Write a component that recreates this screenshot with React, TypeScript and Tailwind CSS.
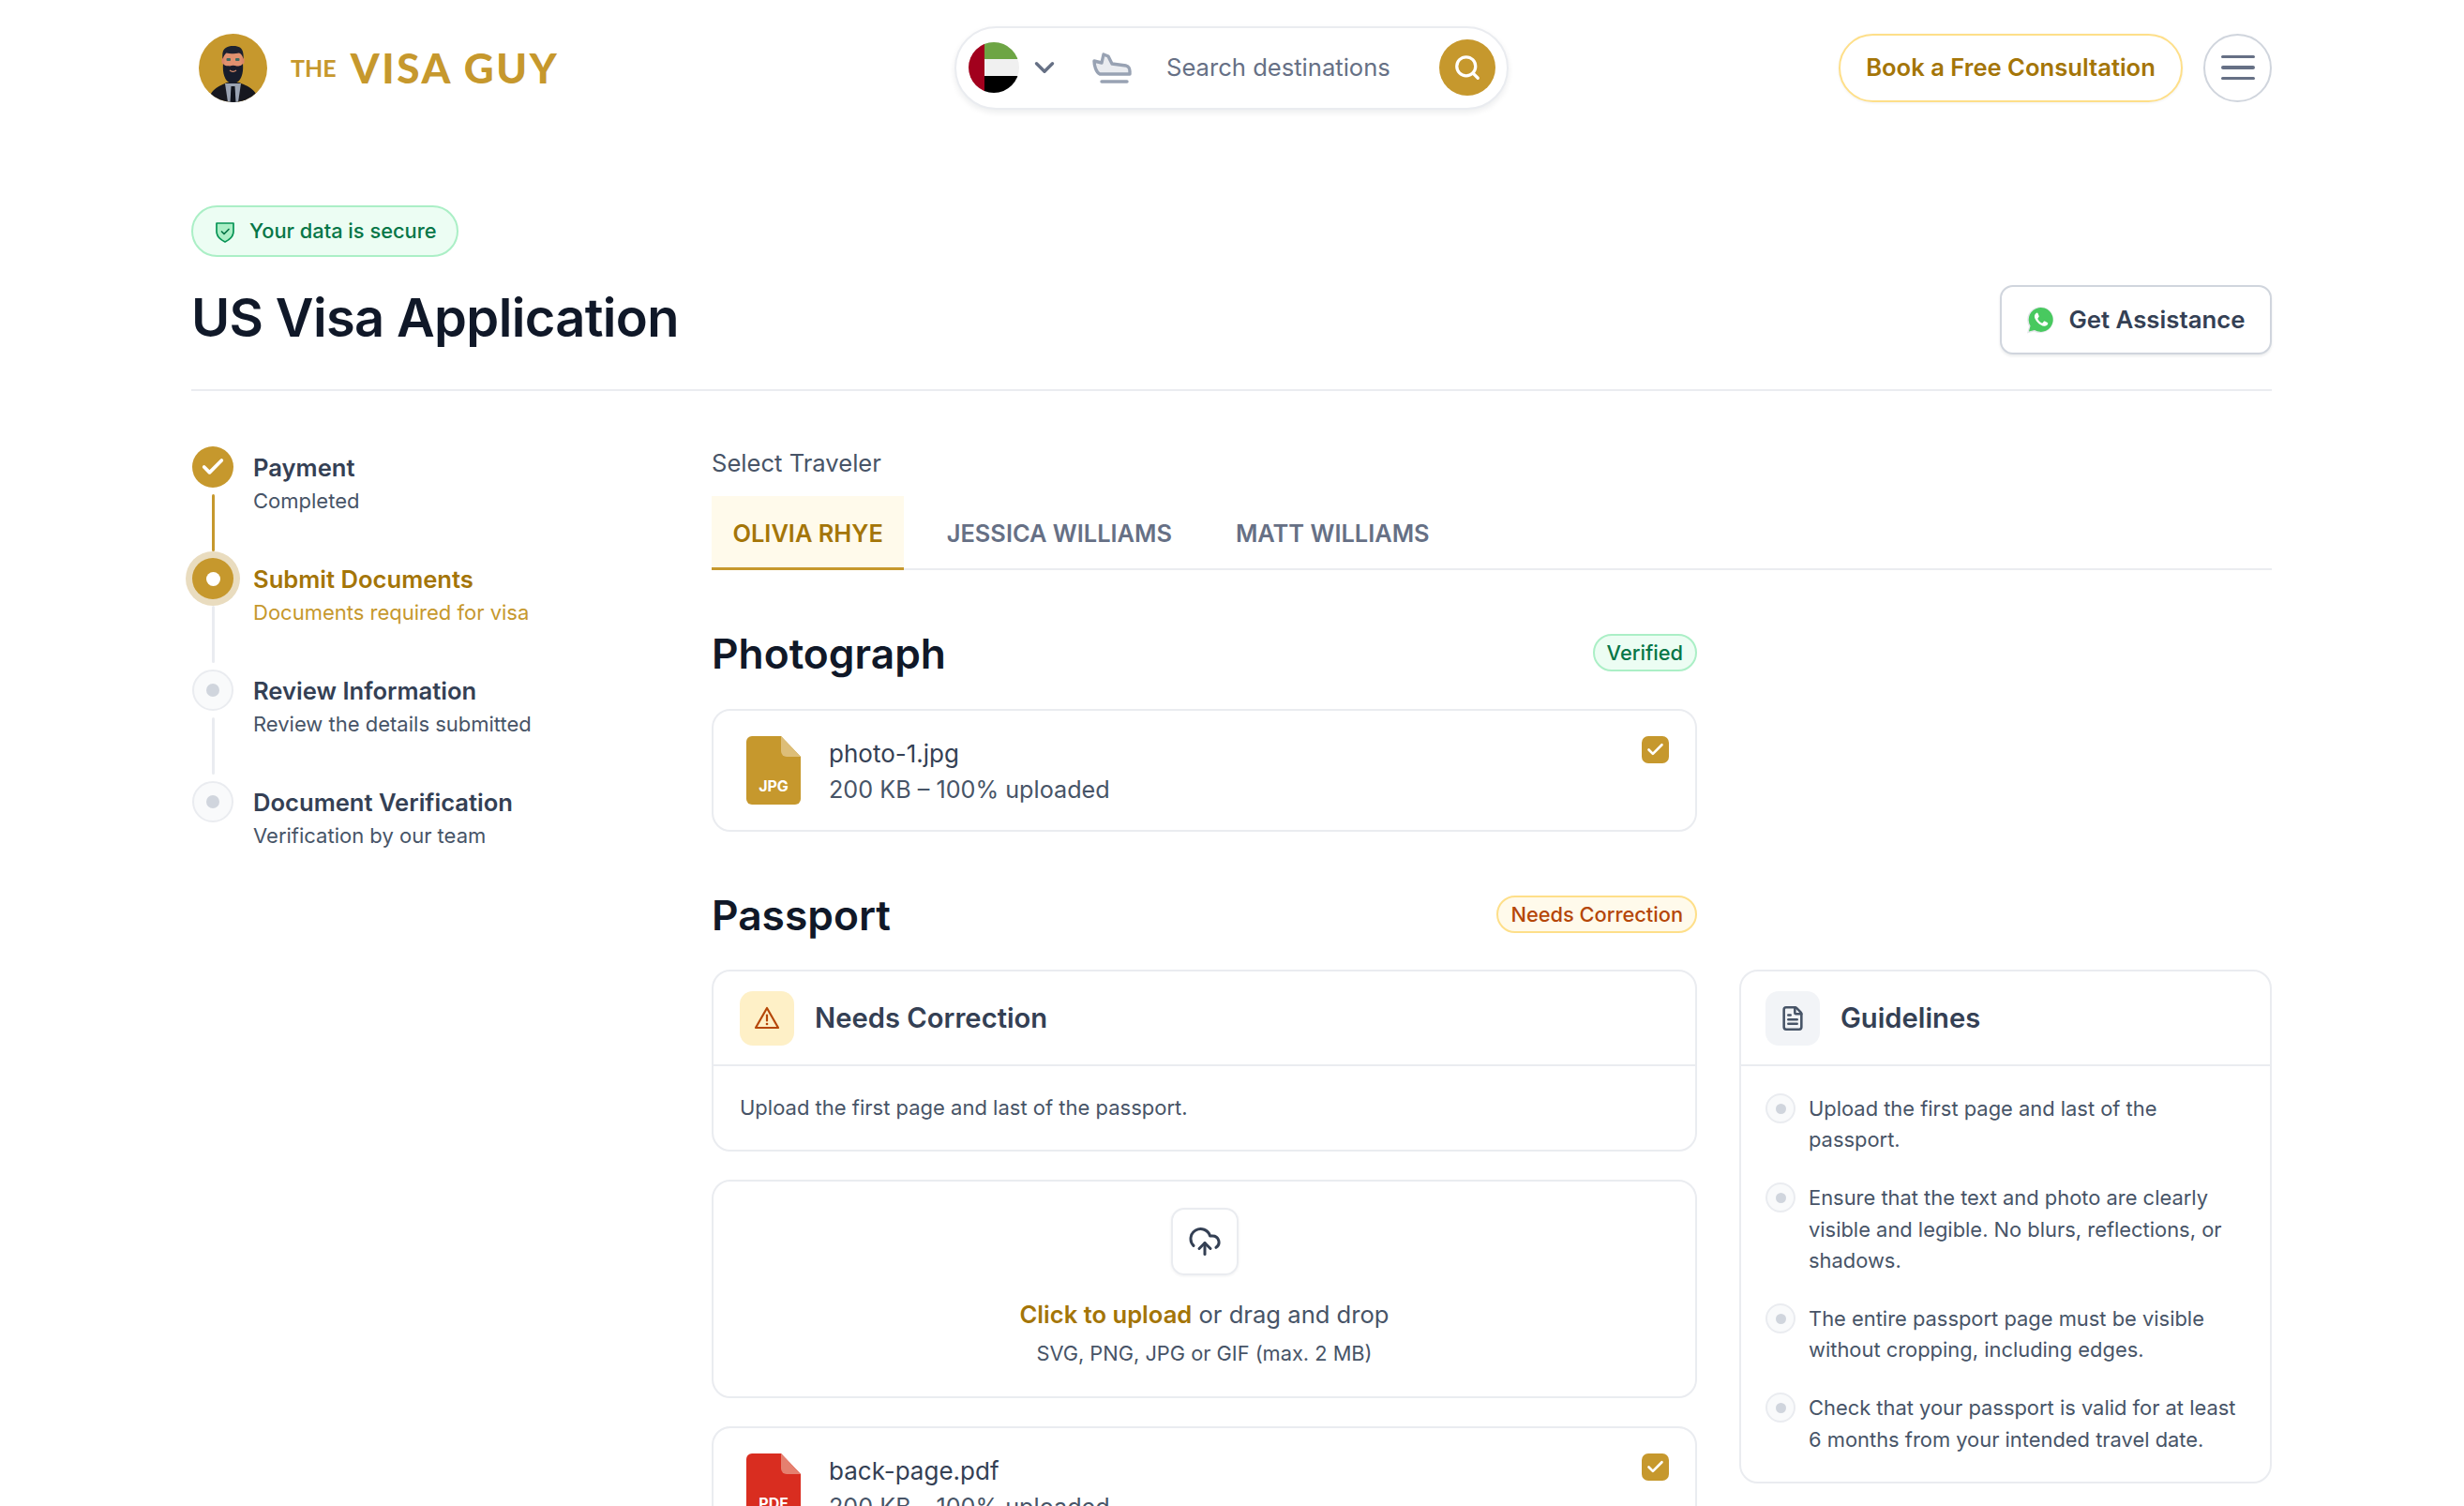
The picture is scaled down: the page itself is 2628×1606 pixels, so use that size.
// Visa application - documents step
import { Check, ChevronDown, CloudUpload, FileText, Search } from 'lucide-react';

const steps = [
    { title: 'Payment', sub: 'Completed', state: 'done' },
    { title: 'Submit Documents', sub: 'Documents required for visa', state: 'active' },
    { title: 'Review Information', sub: 'Review the details submitted', state: 'todo' },
    { title: 'Document Verification', sub: 'Verification by our team', state: 'todo' },
];

const guidelines = [
    'Upload the first page and last of the passport.',
    'Ensure that the text and photo are clearly visible and legible. No blurs, reflections, or shadows.',
    'The entire passport page must be visible without cropping, including edges.',
    'Check that your passport is valid for at least 6 months from your intended travel date.',
];

function Avatar() {
    return (
        <svg viewBox="0 0 73 73" className="ml-[8px] w-[73px] h-[73px] shrink-0">
            <defs>
                <clipPath id="avatar-clip">
                    <circle cx="36.5" cy="36.5" r="36.5" />
                </clipPath>
            </defs>
            <g clipPath="url(#avatar-clip)">
                <rect width="73" height="73" fill="#C6982D" />
                <path d="M10 73 C12 58 24 55 30 52 L43 52 C50 55 62 58 64 73 Z" fill="#17181f" />
                <path d="M28 53 L45 53 L42 73 L31 73 Z" fill="#9aa3b2" />
                <path d="M34.5 56 L38.5 56 L39.5 73 L33.5 73 Z" fill="#10131c" />
                <rect x="26" y="18" width="21" height="20" rx="7" fill="#e0916f" />
                <rect x="24.5" y="25" width="3" height="7" rx="1.5" fill="#d98667" />
                <rect x="45.5" y="25" width="3" height="7" rx="1.5" fill="#d98667" />
                <path d="M25.5 27 C24 16 29 13 37 13 C45 13 48.5 17 47.5 27 C46.5 23 45 21 43 20.5 C38 22 32 21 29.5 20.5 C27.5 22 26.5 24 25.5 27 Z" fill="#1d2230" />
                <path d="M26 32 C28 35 31 34 33 34.5 C35.5 33.5 38 33.5 40.5 34.5 C42.5 34 45 35 47 32 C48 42 45 53 36.5 53 C28 53 25 42 26 32 Z" fill="#171c2b" />
                <rect x="29.5" y="26" width="4.5" height="3" rx="1" fill="#3f6b62" />
                <rect x="39" y="26" width="4.5" height="3" rx="1" fill="#3f6b62" />
                <path d="M33 39 C35 40.5 38 40.5 40 39" stroke="#e0916f" strokeWidth="1.2" fill="none" />
            </g>
        </svg>
    );
}

function Flag() {
    return (
        <svg viewBox="0 0 54 54" className="w-[54px] h-[54px] shrink-0">
            <defs>
                <clipPath id="flag-clip">
                    <circle cx="27" cy="27" r="27" />
                </clipPath>
            </defs>
            <g clipPath="url(#flag-clip)">
                <rect width="54" height="54" fill="#F0F0F0" />
                <rect x="17" width="37" height="18" fill="#6DA544" />
                <rect x="17" y="36" width="37" height="18" fill="#000000" />
                <rect width="17" height="54" fill="#A2001D" />
            </g>
        </svg>
    );
}

function PlaneIcon() {
    return (
        <svg viewBox="0 0 42 34" className="w-[42px] h-[34px] shrink-0" fill="none">
            <path d="M2 10 L10 12 L12 3 L17 5 L21 13 L36 15 C39 16 40 18 40 21 L40 24 L8 24 C4 22 2 15 2 10 Z" fill="#EAECF0" stroke="#98A2B3" strokeWidth="3.4" strokeLinejoin="round" />
            <path d="M10 32 H37" stroke="#98A2B3" strokeWidth="3.4" strokeLinecap="round" />
        </svg>
    );
}

function ShieldIcon() {
    return (
        <svg viewBox="0 0 24 24" className="w-[24px] h-[26px] shrink-0" fill="none">
            <path d="M3 3 H21 V12 C21 17.5 16 21 12 23 C8 21 3 17.5 3 12 Z" fill="#ABEFC6" stroke="#079455" strokeWidth="1.7" strokeLinejoin="round" />
            <path d="M8.5 12 L11 14.5 L16 9.5" stroke="#067647" strokeWidth="1.7" strokeLinecap="round" strokeLinejoin="round" />
        </svg>
    );
}

function WhatsappIcon() {
    return (
        <svg viewBox="0 0 32 32" className="w-[31px] h-[32px] shrink-0">
            <path d="M1 31 L3.2 23.4 A14.4 14.4 0 1 1 8.8 28.8 Z" fill="#E5E7EB" />
            <path d="M3 29 L4.7 22.8 A13.4 13.4 0 1 1 9.3 27.4 Z" fill="#48C95F" />
            <path d="M11.6 8.4 C10.4 8.9 9 10.4 9.2 12.6 C9.5 16.4 15 22.6 20 23 C22 23.1 23.6 21.8 24 20.5 C24.2 19.8 24 19.3 23.4 19 L20.6 17.6 C20.1 17.4 19.7 17.5 19.4 17.9 L18.3 19.3 C18 19.6 17.6 19.7 17.2 19.5 C15.5 18.7 13.7 16.9 12.8 15.1 C12.6 14.7 12.7 14.4 13 14.1 L13.9 13 C14.2 12.6 14.2 12.3 14.1 11.9 L13 9 C12.7 8.4 12.2 8.2 11.6 8.4 Z" fill="#FFFFFF" />
        </svg>
    );
}

function WarningIcon() {
    return (
        <svg viewBox="0 0 28 28" className="w-[28px] h-[28px]" fill="none">
            <path d="M14 3 L26 24 H2 Z" fill="#FEF0C7" stroke="#B54708" strokeWidth="2.2" strokeLinejoin="round" />
            <path d="M14 10.5 V16.5" stroke="#B54708" strokeWidth="2.2" strokeLinecap="round" />
            <circle cx="14" cy="20" r="1.3" fill="#B54708" />
        </svg>
    );
}

function FileIcon({ label, color, fold }: { label: string; color: string; fold: string }) {
    return (
        <div className="relative w-[58px] h-[73px] shrink-0">
            <svg viewBox="0 0 58 73" className="w-[58px] h-[73px]">
                <path d="M6 0 H37 L58 22 V67 A6 6 0 0 1 52 73 H6 A6 6 0 0 1 0 67 V6 A6 6 0 0 1 6 0 Z" fill={color} />
                <path d="M37 0 L58 22 H43 A6 6 0 0 1 37 16 Z" fill={fold} />
            </svg>
            <span className="absolute inset-x-0 bottom-[10px] text-center text-white text-[16px] leading-[20px] font-bold">{label}</span>
        </div>
    );
}

function FileRow({ name, label, color, fold }: { name: string; label: string; color: string; fold: string }) {
    return (
        <div className="flex items-start h-[131px] pl-[35px] pr-[28px] pt-[27px] border-2 border-[#EAECF0] rounded-[20px] bg-white">
            <FileIcon label={label} color={color} fold={fold} />
            <div className="ml-[30px] flex-1 -mt-[1px]">
                <div className="text-[26px] leading-[40px] text-[#344054]">{name}</div>
                <div className="text-[25.2px] leading-[40px] text-[#475467] -mt-[2px]">200 KB – 100% uploaded</div>
            </div>
            <div className="w-[29px] h-[29px] rounded-[7px] bg-[#C6982D] flex items-center justify-center">
                <Check className="w-[21px] h-[21px] text-white" strokeWidth={3} />
            </div>
        </div>
    );
}

function Stepper() {
    return (
        <div className="w-[555px] shrink-0 pt-[59px]">
            {steps.map((s, i) => (
                <div key={s.title} className="flex">
                    <div className="w-[46px] flex flex-col items-center">
                        {s.state === 'done' && (
                            <div className="w-[44px] h-[44px] rounded-full bg-[#C6982D] flex items-center justify-center">
                                <Check className="w-[28px] h-[28px] text-white" strokeWidth={3.2} />
                            </div>
                        )}
                        {s.state === 'active' && (
                            <div className="w-[44px] h-[44px] rounded-full bg-[#C6982D] ring-[7px] ring-[#E9DCBF] flex items-center justify-center">
                                <div className="w-[15px] h-[15px] rounded-full bg-white" />
                            </div>
                        )}
                        {s.state === 'todo' && (
                            <div className="w-[44px] h-[44px] rounded-full bg-[#F9FAFB] border-2 border-[#EAECF0] flex items-center justify-center">
                                <div className="w-[14px] h-[14px] rounded-full bg-[#D0D5DD]" />
                            </div>
                        )}
                        {i < steps.length - 1 && (
                            <div className={`w-[3px] h-[61px] my-[7px] rounded-full ${s.state === 'done' ? 'bg-[#C6982D]' : 'bg-[#EAECF0]'}`} />
                        )}
                    </div>
                    <div className="ml-[20px] pt-[3px]">
                        <div className={`text-[25.6px] leading-[39px] font-semibold ${s.state === 'active' ? 'text-[#A47508]' : 'text-[#344054]'}`}>{s.title}</div>
                        <div className={`text-[22px] leading-[33px] ${s.state === 'active' ? 'text-[#C6982D]' : 'text-[#475467]'}`}>{s.sub}</div>
                    </div>
                </div>
            ))}
        </div>
    );
}

function SectionHead({ title, badge, tone }: { title: string; badge: string; tone: 'ok' | 'warn' }) {
    return (
        <div className="flex items-center justify-between h-[60px] w-[1051px]">
            <h2 className="text-[44.3px] leading-[60px] font-semibold text-[#101828]">{title}</h2>
            <span className={`h-[40px] mb-[2px] px-[13px] flex items-center rounded-full border-2 text-[21.8px] font-medium ${tone === 'ok' ? 'bg-[#ECFDF3] border-[#ABEFC6] text-[#067647]' : 'bg-[#FFFAEB] border-[#FEDF89] text-[#B54708]'}`}>
                {badge}
            </span>
        </div>
    );
}

export default function App() {
    return (
        <div className="h-[1606px] overflow-hidden bg-white font-['Inter',sans-serif] pl-[204px] pr-[205px]">
            {/* Top bar */}
            <header className="h-[144px] flex items-center">
                <div className="flex-1 min-w-0 flex items-center">
                    <Avatar />
                    <div className="ml-[25px] flex items-center font-['Lato',sans-serif] font-black text-[#C6982D]">
                        <span className="text-[25px] leading-[50px] font-bold">THE</span>
                        <span className="ml-[15px] text-[44px] leading-[50px] tracking-[2.7px]">VISA GUY</span>
                    </div>
                </div>
                <div className="w-[591px] h-[89px] shrink-0 flex items-center rounded-full border-2 border-[#EAECF0] bg-white shadow-[0_3px_6px_rgba(16,24,40,0.08)] pl-[13px] pr-[12px]">
                    <Flag />
                    <ChevronDown className="ml-[10px] w-[34px] h-[34px] text-[#667085]" strokeWidth={2.4} />
                    <div className="ml-[34px]"><PlaneIcon /></div>
                    <span className="ml-[37px] flex-1 text-[25.6px] text-[#667085]">Search destinations</span>
                    <div className="w-[60px] h-[60px] rounded-full bg-[#C6982D] flex items-center justify-center">
                        <Search className="w-[30px] h-[30px] text-white" strokeWidth={2.6} />
                    </div>
                </div>
                <div className="flex-1 min-w-0 flex items-center justify-end gap-[22px]">
                    <button className="h-[73px] w-[367px] rounded-full border-2 border-[#FEDF89] bg-white text-[25.6px] font-semibold text-[#A47508] shadow-[0_1px_3px_rgba(16,24,40,0.06)]">
                        Book a Free Consultation
                    </button>
                    <div className="w-[73px] h-[73px] rounded-full border-2 border-[#D0D5DD] flex flex-col items-center justify-center gap-[8px]">
                        <span className="w-[36px] h-[3.4px] rounded-full bg-[#667085]" />
                        <span className="w-[36px] h-[3.4px] rounded-full bg-[#667085]" />
                        <span className="w-[36px] h-[3.4px] rounded-full bg-[#667085]" />
                    </div>
                </div>
            </header>

            {/* Title */}
            <div className="pt-[75px] pb-[37px] border-b-2 border-[#EAECF0] flex justify-between items-end">
                <div>
                    <span className="inline-flex items-center h-[55px] pl-[22px] pr-[22px] gap-[14px] rounded-full bg-[#ECFDF3] border-2 border-[#ABEFC6] text-[21.8px] font-medium text-[#067647]">
                        <ShieldIcon />
                        Your data is secure
                    </span>
                    <h1 className="mt-[27px] mb-[1px] text-[56px] leading-[76px] tracking-[-0.65px] font-semibold text-[#101828]">US Visa Application</h1>
                </div>
                <button className="h-[74px] w-[290px] flex items-center justify-center gap-[14px] rounded-[14px] border-2 border-[#D0D5DD] bg-white shadow-[0_2px_3px_rgba(16,24,40,0.08)] text-[25.8px] font-semibold text-[#344054]">
                    <WhatsappIcon />
                    Get Assistance
                </button>
            </div>

            <div className="flex items-start">
                <Stepper />

                <main className="flex-1 pt-[57px]">
                    <div className="text-[25.6px] leading-[40px] text-[#475467]">Select Traveler</div>
                    <div className="mt-[15px] flex gap-[23px] h-[79px] border-b-2 border-[#EAECF0]">
                        <div className="h-[79px] px-[22.5px] pt-[4px] flex items-center border-b-[3px] border-[#C6982D] bg-[#FFFAEB] text-[25.4px] font-semibold text-[#A47508]">OLIVIA RHYE</div>
                        <div className="h-[79px] px-[22.5px] pt-[1px] flex items-center text-[25.4px] font-semibold text-[#667085]">JESSICA WILLIAMS</div>
                        <div className="h-[79px] px-[22.5px] pt-[1px] flex items-center text-[25.4px] font-semibold text-[#667085]">MATT WILLIAMS</div>
                    </div>

                    <div className="mt-[59px]">
                        <SectionHead title="Photograph" badge="Verified" tone="ok" />
                        <div className="mt-[29px] w-[1051px]">
                            <FileRow name="photo-1.jpg" label="JPG" color="#C6982D" fold="#DDBE78" />
                        </div>
                    </div>

                    <div className="mt-[59px]">
                        <SectionHead title="Passport" badge="Needs Correction" tone="warn" />
                        <div className="mt-[28px] flex items-start gap-[45px]">
                            <div className="w-[1051px] shrink-0 flex flex-col gap-[30px]">
                                <div className="border-2 border-[#EAECF0] rounded-[20px] bg-white">
                                    <div className="h-[101px] px-[28px] flex items-center gap-[22px] border-b-2 border-[#EAECF0]">
                                        <div className="w-[58px] h-[58px] rounded-[14px] bg-[#FEF0C7] flex items-center justify-center">
                                            <WarningIcon />
                                        </div>
                                        <span className="text-[29.2px] font-semibold text-[#344054]">Needs Correction</span>
                                    </div>
                                    <div className="h-[89px] px-[28px] flex items-center text-[22px] text-[#475467]">
                                        Upload the first page and last of the passport.
                                    </div>
                                </div>

                                <div className="h-[233px] border-2 border-[#EAECF0] rounded-[20px] bg-white flex flex-col items-center pt-[28px]">
                                    <div className="w-[72px] h-[72px] rounded-[14px] border-2 border-[#EAECF0] shadow-[0_1px_3px_rgba(16,24,40,0.06)] flex items-center justify-center">
                                        <CloudUpload className="w-[36px] h-[36px] text-[#344054]" strokeWidth={2} />
                                    </div>
                                    <div className="mt-[22px] text-[25.6px] leading-[40px] text-[#475467]">
                                        <span className="font-semibold text-[#A47508]">Click to upload</span> or drag and drop
                                    </div>
                                    <div className="mt-[5px] text-[21.8px] leading-[33px] text-[#475467]">SVG, PNG, JPG or GIF (max. 2 MB)</div>
                                </div>

                                <FileRow name="back-page.pdf" label="PDF" color="#D92D20" fold="#E5806F" />
                            </div>

                            <div className="flex-1 border-2 border-[#EAECF0] rounded-[20px] bg-white">
                                <div className="h-[101px] px-[26px] flex items-center gap-[22px] border-b-2 border-[#EAECF0]">
                                    <div className="w-[58px] h-[58px] rounded-[14px] bg-[#F2F4F7] flex items-center justify-center">
                                        <FileText className="w-[28px] h-[28px] text-[#475467]" strokeWidth={2.2} />
                                    </div>
                                    <span className="text-[29.2px] font-semibold text-[#344054]">Guidelines</span>
                                </div>
                                <ul className="px-[26px] pt-[29px] pb-[28px] flex flex-col gap-[28.5px]">
                                    {guidelines.map(g => (
                                        <li key={g} className="flex items-start gap-[14px]">
                                            <span className="w-[32px] h-[32px] shrink-0 rounded-full bg-[#F9FAFB] border-2 border-[#EAECF0] flex items-center justify-center">
                                                <span className="w-[11px] h-[11px] rounded-full bg-[#D0D5DD]" />
                                            </span>
                                            <span className="text-[21.9px] leading-[33.4px] text-[#475467]">{g}</span>
                                        </li>
                                    ))}
                                </ul>
                            </div>
                        </div>
                    </div>
                </main>
            </div>
        </div>
    );
}
